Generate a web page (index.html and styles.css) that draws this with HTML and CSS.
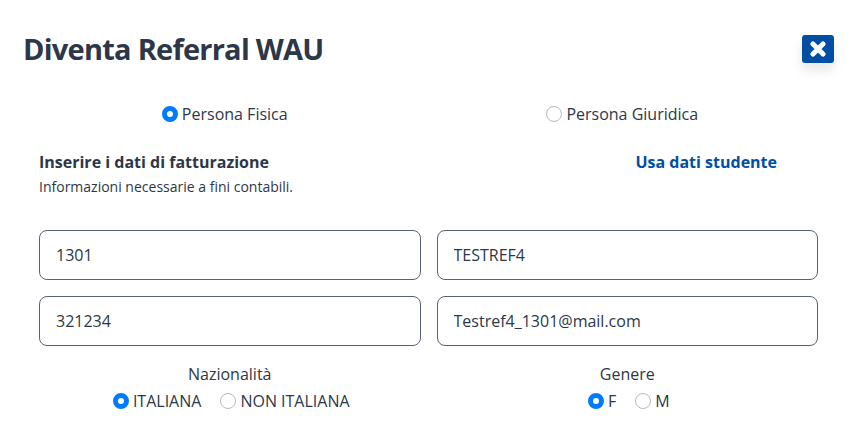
FILE: index.html
```
<!DOCTYPE html>
<html lang="it">

<head>
    <meta charset="UTF-8">
    <meta name="viewport" content="width=device-width, initial-scale=1.0">
    <title>Diventa Referral WAU</title>
    <link rel="stylesheet" href="styles.css">
</head>

<body>
    <header class="modal-header">
        <h1>Diventa Referral WAU</h1>
        <button type="button" class="close-button" aria-label="Chiudi">
            <svg viewBox="0 0 16 16" width="16" height="16">
                <path d="M3 3 L13 13 M13 3 L3 13" />
            </svg>
        </button>
    </header>

    <form class="referral-form">
        <div class="row person-type">
            <div class="options">
                <label><input type="radio" name="tipo" checked>Persona Fisica</label>
            </div>
            <div class="options">
                <label><input type="radio" name="tipo">Persona Giuridica</label>
            </div>
        </div>

        <div class="billing">
            <div>
                <h2>Inserire i dati di fatturazione</h2>
                <p>Informazioni necessarie a fini contabili.</p>
            </div>
            <a class="student-link">Usa dati studente</a>
        </div>

        <div class="row fields">
            <input type="text" class="field" value="1301">
            <input type="text" class="field" value="TESTREF4">
            <input type="text" class="field" value="321234">
            <input type="text" class="field" value="Testref4_1301@mail.com">
        </div>

        <div class="row choices">
            <div>
                <div class="choice-title">Nazionalità</div>
                <div class="options">
                    <label><input type="radio" name="nazionalita" checked>ITALIANA</label>
                    <label><input type="radio" name="nazionalita">NON ITALIANA</label>
                </div>
            </div>
            <div>
                <div class="choice-title">Genere</div>
                <div class="options">
                    <label><input type="radio" name="genere" checked>F</label>
                    <label><input type="radio" name="genere">M</label>
                </div>
            </div>
        </div>
    </form>
</body>

</html>
```
FILE: styles.css
```
:root {
    --primary-color: #004fa3;
    --text-color: #2d3748;
    --border-color: #596273;
}

* {
    box-sizing: border-box;
}

body {
    font-family: "Open Sans", "Noto Sans", sans-serif;
    font-size: 16px;
    line-height: 24px;
    color: var(--text-color);
    background-color: white;
    margin: 0;
    overflow: hidden;
}

h1,
h2,
p {
    margin: 0;
}

.modal-header {
    display: flex;
    justify-content: space-between;
    align-items: flex-start;
    padding: 29px 18px 0 23px;
    height: 102px;
}

h1 {
    font-size: 29px;
    line-height: 40px;
    letter-spacing: -0.75px;
}

.close-button {
    display: flex;
    align-items: center;
    justify-content: center;
    width: 32px;
    height: 28px;
    margin-top: 6px;
    padding: 0;
    border: none;
    border-radius: 3px;
    background-color: var(--primary-color);
    box-shadow: 0 8px 12px rgba(0, 0, 0, 0.09);
    cursor: pointer;
}

.close-button path {
    stroke: white;
    stroke-width: 5;
    stroke-linecap: round;
}

.referral-form {
    padding: 0 34px 0 39px;
}

.row {
    display: grid;
    grid-template-columns: 1fr 1fr;
    column-gap: 16px;
}

.person-type .options {
    padding-right: 10px;
}

.options {
    display: flex;
    justify-content: center;
    gap: 19px;
}

.options label {
    display: flex;
    align-items: center;
}

input[type=radio] {
    appearance: none;
    width: 16px;
    height: 16px;
    margin: 0 4px 0 0;
    border: 1px solid #b9b9b9;
    border-radius: 50%;
    background-color: white;
}

input[type=radio]:checked {
    border: 5px solid #007aff;
}

.billing {
    display: flex;
    justify-content: space-between;
    margin-top: 24px;
    padding-right: 41px;
}

.billing h2 {
    font-size: 16px;
    line-height: 24px;
}

.billing p {
    font-size: 14px;
    line-height: 26px;
}

.student-link {
    color: var(--primary-color);
    font-weight: bold;
}

.fields {
    row-gap: 16px;
    margin-top: 30px;
}

.field {
    width: 100%;
    height: 50px;
    padding: 0 16px;
    border: 1px solid var(--border-color);
    border-radius: 8px;
    font: inherit;
    color: inherit;
    background-color: white;
}

.choices {
    margin-top: 16px;
    text-align: center;
}

.choices .options {
    margin-top: 3px;
    padding-left: 3px;
}
```
